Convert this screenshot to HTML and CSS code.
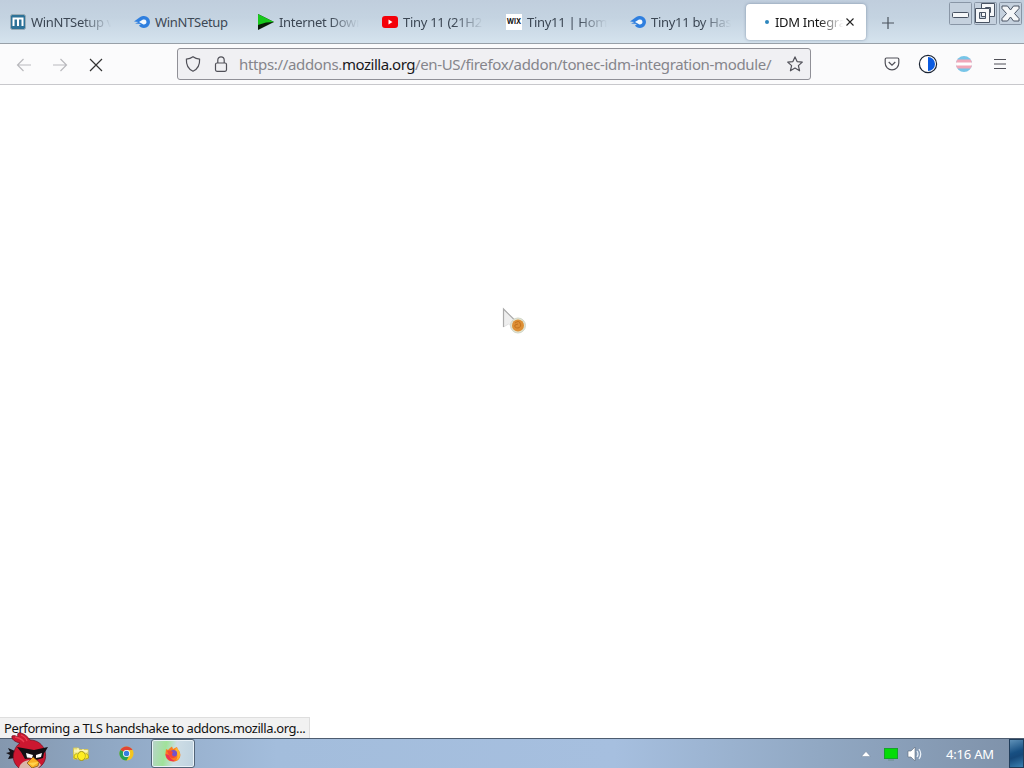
FILE: index.html
```html
<!DOCTYPE html>
<html lang="en">
<head>
  <meta charset="UTF-8">
  <meta name="viewport" content="width=device-width, initial-scale=1.0">
  <title>IDM Integration Module</title>
  <link rel="stylesheet" href="styles.css">
</head>
<body>
  <div class="screen">
    <div class="tab-bar">
      <div class="tab">
        <svg class="tab-icon" viewBox="0 0 16 16"><rect x=".5" y=".5" width="15" height="15" rx="2" fill="#2d7298" stroke="#9aabb5"/><path d="M3.500 12V4.500h9V12M8 4.500V12" fill="none" stroke="#fff" stroke-width="2"/></svg>
        <span class="tab-label">WinNTSetup v</span>
      </div>
      <div class="tab">
        <svg class="tab-icon" viewBox="0 0 16 16"><path d="M0 7.500 5.500 3.500C7 2 9 2 10 2a6 6 0 0 1 0 12C7.500 14 6 13 5 11.500L7 10 1 9.500 4.500 8Z" fill="#2f7fdf"/><path d="M5 8 9 5.600a2.500 2.500 0 1 1 0 4.600Z" fill="#f4faff"/></svg>
        <span class="tab-label">WinNTSetup</span>
      </div>
      <div class="tab">
        <svg class="tab-icon" viewBox="0 0 16 16"><path d="M0 0 16 8 0 16Z" fill="#0a1c08"/><path d="M0 0 16 8 8 8.500 0 11Z" fill="#18c81c"/></svg>
        <span class="tab-label">Internet Down</span>
      </div>
      <div class="tab">
        <svg class="tab-icon" viewBox="0 0 16 16"><rect x="0" y="2" width="16" height="12" rx="3" fill="#f40009"/><path d="M6.500 5.500 10.500 8l-4 2.500Z" fill="#fff"/></svg>
        <span class="tab-label">Tiny 11 (21H2</span>
      </div>
      <div class="tab">
        <span class="tab-icon wix">WIX</span>
        <span class="tab-label">Tiny11 | Home</span>
      </div>
      <div class="tab">
        <svg class="tab-icon" viewBox="0 0 16 16"><path d="M0 7.500 5.500 3.500C7 2 9 2 10 2a6 6 0 0 1 0 12C7.500 14 6 13 5 11.500L7 10 1 9.500 4.500 8Z" fill="#2f7fdf"/><path d="M5 8 9 5.600a2.500 2.500 0 1 1 0 4.600Z" fill="#f4faff"/></svg>
        <span class="tab-label">Tiny11 by Has</span>
      </div>
      <div class="tab active">
        <span class="loading-dot"></span>
        <span class="tab-label">IDM Integra</span>
        <svg class="tab-close" viewBox="0 0 10 10"><path d="m1.500 1.500 7 7M8.500 1.500l-7 7" stroke="#222" stroke-width="1.100"/></svg>
      </div>
      <svg class="new-tab" viewBox="0 0 14 14"><path d="M7 1v12M1 7h12" stroke="#4a535c" stroke-width="1.200"/></svg>
      <div class="window-buttons">
        <svg viewBox="0 0 23 23"><rect class="frame" x=".5" y=".5" width="22" height="22" rx="1"/><rect class="glyph" x="3.500" y="10.500" width="16" height="5" rx="1"/></svg>
        <svg viewBox="0 0 23 23"><rect class="frame" x=".5" y=".5" width="22" height="22" rx="1"/><path class="glyph" fill-rule="evenodd" d="M7.500 1.500h13v13h-13ZM11.500 5.500v5h5v-5Z"/><path class="glyph" fill-rule="evenodd" d="M1.500 6.500h14v14h-14ZM5.500 10.500v6h6v-6Z"/></svg>
        <svg viewBox="0 0 23 23"><rect class="frame" x=".5" y=".5" width="22" height="22" rx="1"/><path class="glyph" stroke-linejoin="round" d="M3 4h5.500l3 4 3-4H20v2.500l-4.500 5L20 16.500V19h-5.500l-3-4-3 4H3v-2.500l4.500-5L3 6.500Z"/></svg>
      </div>
    </div>

    <div class="toolbar">
      <div class="nav-buttons">
        <svg class="faded" viewBox="0 0 16 16"><path d="M15 9H1.500M7.500 3l-6 6 6 6"/></svg>
        <svg class="faded" viewBox="0 0 16 16"><path d="M1 9h13.500M8.500 3l6 6-6 6"/></svg>
        <svg class="stop" viewBox="0 0 16 16"><path d="m2 3 12 12M14 3 2 15"/></svg>
      </div>
      <div class="url-bar">
        <svg class="shield" viewBox="0 0 16 16"><path d="M8 .8c2 1.500 4 2.200 6.600 2.400.3 5.300-1.200 9.500-6.600 12C2.600 12.700 1.100 8.500 1.400 3.200 4 3 6 2.300 8 .8Z"/></svg>
        <svg class="lock" viewBox="0 0 16 16"><rect x="2.500" y="7" width="11" height="8.300" rx="1.500"/><path d="M4.800 7V4a3.200 3.200 0 0 1 6.400 0v3"/></svg>
        <span class="url">https://addons.<b>mozilla.org</b>/en-US/firefox/addon/tonec-idm-integration-module/</span>
        <svg class="star" viewBox="0 0 16 16"><path d="m8 .9 2.100 4.700 5.200.5-3.900 3.500 1.200 5.200L8 12.100l-4.600 2.700 1.200-5.200L.7 6.100l5.200-.5Z" stroke-linejoin="round"/></svg>
      </div>
      <div class="tools">
        <svg class="pocket" viewBox="0 0 16 16"><path d="M2.500 2h11c.8 0 1.300.5 1.300 1.300V7a6.800 6.800 0 0 1-13.600 0V3.300C1.200 2.500 1.700 2 2.500 2Z"/><path d="M4.700 6 8 9.200 11.300 6"/></svg>
        <svg class="contrast" viewBox="0 0 20 20"><circle cx="10" cy="10" r="8.600" fill="#fff" stroke="#1b2433" stroke-width="1.200"/><path d="M10 3a7 7 0 0 1 0 14Z" fill="#0b5be0"/></svg>
        <svg class="flag" viewBox="0 0 16 16"><clipPath id="round"><circle cx="8" cy="8" r="8"/></clipPath><g clip-path="url(#round)"><path fill="#77c5e8" d="M0 0h16v16H0Z"/><path fill="#f1a7b8" d="M0 3.400h16v9.200H0Z"/><path fill="#fff" d="M0 6.500h16v3H0Z"/></g></svg>
        <svg class="menu" viewBox="0 0 16 16"><path d="M2 3.500h12M2 8h12M2 12.500h12"/></svg>
      </div>
    </div>

    <div class="page"></div>
    <div class="status">Performing a TLS handshake to addons.mozilla.org...</div>

    <div class="taskbar">
      <svg class="app-icon explorer" viewBox="0 0 16 16"><path d="M.5 2h5l1 1.500H15V13H.5Z" fill="#f5ec8a" stroke="#d3c65a"/><path d="M1 5h14M5 2v3M10 3v3" stroke="#fffbd0"/><ellipse cx="8.500" cy="10" rx="4" ry="4.500" fill="#ffee20" stroke="#a39818"/><path d="M4.500 8C2 7 1 9 1 12l3 1M12.500 8c2-1 3 1 3 4l-3 1" fill="#ffee20" stroke="#a39818" stroke-width=".8"/></svg>
      <svg class="app-icon chrome" viewBox="0 0 16 16"><circle cx="8" cy="8" r="7.500" fill="#f5c51f"/><path d="M8 8 1.500 4.200A7.500 7.500 0 0 1 14.500 4.200H8Z" fill="#df4535"/><path d="M1.500 4.200A7.500 7.500 0 0 0 8 15.500L11 10 8 8Z" fill="#28a255"/><circle cx="8" cy="8" r="3.800" fill="#fff"/><circle cx="8" cy="8" r="2.900" fill="#377fe0"/></svg>
      <div class="running-app">
        <svg class="app-icon" viewBox="0 0 16 16"><path d="M5 2 7 .5 8 3l4-2 1 3c4 3 3 11-4 11.500C3 16 0 12 .5 7L1 3l2 1Z" fill="#fa7b20"/><path d="M11 1.500c6 4 5 11 0 13 2-3 2-7-1-10Z" fill="#ffb42b"/><path d="M.5 8C1 13 5 16 10 15c-3-1-5-3-6-6Z" fill="#ee3155"/><circle cx="8.500" cy="7.500" r="3.600" fill="#7552c8"/><path d="M2 5c3-1 4 0 6 1L7 8c0 2 2 3 4 2-1 3-6 3-7-1Z" fill="#f64b31"/></svg>
      </div>
      <div class="tray">
        <svg class="arrow" viewBox="0 0 10 6"><path d="M.5 5.500 5 .5l4.500 5Z" fill="#fff" stroke="#65788f" stroke-width=".4"/></svg>
        <svg class="monitor" viewBox="0 0 16 14"><rect x="1.500" y="1.500" width="13" height="10" fill="#04dc08" stroke="#15a32a"/><path d="M5 13h6" stroke="#6a8f88"/></svg>
        <svg class="speaker" viewBox="0 0 16 16"><path d="M1 5h3l4-4v14l-4-4H1Z" fill="#fff" stroke="#5c6878" stroke-width=".6"/><path d="M10 5q2 3 0 6M12 3q3.500 5 0 10" fill="none" stroke="#eef4fa" stroke-width="1.200"/></svg>
        <span class="clock">4:16 AM</span>
        <span class="show-desktop"></span>
      </div>
    </div>

    <!-- start orb, sticks out over the taskbar -->
    <svg class="start" viewBox="0 0 44 36">
      <path d="m9 19-7-3 2 4-4 1 4 2-2 4 7-1Z" fill="#171319"/>
      <path d="M14 11C9 10 5 7 6 4c2-1 4 0 6 1-1-3 0-5 3-4 4 1 7 4 9 7 8 0 13 5 15 11 2 8-1 14-7 17H13C8 32 6 26 8 20c1-4 3-7 6-9Z" fill="#cc1730" stroke="#6b1020" stroke-width=".7"/>
      <path d="M9 5q6 1 9 5M15 3q5 2 6 6" fill="none" stroke="#ea3d50" stroke-width="1.300"/>
      <path d="M13 36c1-5 6-8 12-8 5 0 8 2 10 5l-3 3Z" fill="#d9b7aa"/>
      <path d="m11 15 17 3 14-3-3 5-1 1-1 5-7 2-3-2-8 1-4-7Z" fill="#120f14"/>
      <path d="m20 21 7 2-1 3-5-.5ZM36 21l-6 2v3l5-1Z" fill="#fff"/>
      <path d="m21 31 6-6 6 5-1 4-6 2Z" fill="#f8ae24" stroke="#64400c" stroke-width=".6"/>
      <path d="m22 31 11-1-6 4Z" fill="#ffd34b"/>
    </svg>

    <svg class="cursor" viewBox="0 0 26 28">
      <path d="M1.500 2v18l5-3 4 3 4-1-2-4h3Z" fill="#eee" stroke="#e2e2e2"/>
      <path d="M1.500 20V2l14 14" fill="none" stroke="#ababab" stroke-width="1.200"/>
      <circle cx="16" cy="18.500" r="7.500" fill="#e2e4d0" stroke="#d2d6c8"/>
      <circle cx="16" cy="18.500" r="6" fill="#dd8f35"/>
      <path d="M13 16q4-3 5 0 2 4-2 5-4 0-3-3l3-1" fill="none" stroke="#c4721c"/>
    </svg>
  </div>
</body>
</html>
```

FILE: styles.css
```css
* {
  box-sizing: border-box;
}
body {
  margin: 0;
  font-family: "Noto Sans", "Open Sans", sans-serif;
  font-size: 13px;
  overflow: hidden;
}
svg {
  display: block;
  flex-shrink: 0;
}
.screen {
  position: relative;
  width: 1024px;
  height: 768px;
  display: flex;
  flex-direction: column;
  background: #fff;
}
.tab-bar {
  height: 44px;
  display: flex;
  padding-left: 2px;
  background: linear-gradient(#c0cedd, #c4d3e1 40%, #d5e3ee);
  border-bottom: 1px solid #98a0a8;
}
.tab {
  width: 120px;
  height: 36px;
  margin: 4px 4px 0 0;
  padding: 0 8px;
  display: flex;
  flex-shrink: 0;
  align-items: center;
  gap: 5px;
  color: #3c4754;
}
.tab-icon {
  width: 16px;
  height: 16px;
  flex-shrink: 0;
}
.wix {
  background: #fff;
  color: #111;
  font: bold 7px/16px Inter, sans-serif;
  text-align: center;
}
.tab-label {
  width: 82px;
  white-space: nowrap;
  line-height: 20px;
  letter-spacing: -0.3px;
  -webkit-mask-image: linear-gradient(to right, #000 62%, transparent 98%);
  mask-image: linear-gradient(to right, #000 62%, transparent 98%);
}
.tab:nth-child(2) .tab-label {
  -webkit-mask-image: none;
  mask-image: none;
}
.active {
  background: #fff;
  border-radius: 4px;
  box-shadow: 0 0 3px rgba(60, 80, 110, 0.5);
  color: #151515;
  gap: 0;
}
.loading-dot {
  width: 4px;
  height: 4px;
  margin: 0 6px 0 11px;
  border-radius: 50%;
  background: #2d86bd;
  flex-shrink: 0;
}
.active .tab-label {
  width: 70px;
}
.tab-close {
  width: 10px;
  height: 10px;
}
.new-tab {
  width: 14px;
  height: 14px;
  margin: 16px 0 0 11px;
}
.window-buttons {
  display: flex;
  gap: 2px;
  margin: 2px 2px 0 auto;
}
.window-buttons svg {
  width: 23px;
  height: 23px;
}
.frame {
  fill: #c5d1de;
  stroke: #8996a6;
}
.glyph {
  fill: #f5f7f9;
  stroke: #485363;
}
.toolbar {
  height: 41px;
  display: flex;
  align-items: center;
  background: #fbfbfc;
  border-bottom: 1px solid #c8c8cc;
}
.toolbar svg {
  fill: none;
  stroke: #505058;
  stroke-width: 1.2;
}
.nav-buttons {
  width: 177px;
  display: flex;
  gap: 20px;
  padding-left: 16px;
}
.nav-buttons svg {
  width: 16px;
  height: 16px;
}
.toolbar .nav-buttons .faded {
  stroke: #b9b9bd;
}
.toolbar .nav-buttons .stop {
  stroke: #333;
}
.url-bar {
  width: 634px;
  height: 32px;
  display: flex;
  align-items: center;
  padding: 0 7px;
  background: #f0f0f3;
  border: 1px solid #909097;
  border-radius: 3px;
}
.shield, .lock, .star {
  width: 16px;
  height: 16px;
}
.lock {
  margin-left: 12px;
}
.url {
  width: 548px;
  margin-left: 10px;
  white-space: nowrap;
  font-size: 15px;
  letter-spacing: -0.34px;
  color: #85858b;
}
.url b {
  font-weight: normal;
  letter-spacing: -0.5px;
  color: #18181c;
}
.tools {
  display: flex;
  align-items: center;
  margin-left: 73px;
}
.pocket, .flag, .menu {
  width: 16px;
  height: 16px;
}
.contrast {
  width: 20px;
  height: 20px;
  margin: 0 18px;
}
.toolbar .contrast path,
.toolbar .flag path {
  stroke: none;
}
.menu {
  margin-left: 20px;
}
.page {
  flex: 1;
}
.status {
  width: 310px;
  height: 21px;
  padding-left: 4px;
  background: #f1f1f1;
  border: solid #dedede;
  border-width: 1px 1px 0 0;
  color: #111;
  line-height: 21px;
  letter-spacing: -0.41px;
  white-space: nowrap;
}
.taskbar {
  height: 30px;
  display: flex;
  align-items: center;
  padding-left: 73px;
  background: linear-gradient(90deg, #8497ae, #8fa7c3 10%, #a3bddc 27%, #a6bfdf 60%, #91a8c3 80%, #7e91a9);
  border-top: 1px solid #4d5c70;
}
.app-icon {
  width: 16px;
  height: 16px;
}
.chrome {
  width: 15px;
  height: 15px;
  margin-left: 30px;
}
.running-app {
  width: 44px;
  height: 29px;
  margin-left: 17px;
  display: flex;
  align-items: center;
  justify-content: center;
  background: linear-gradient(100deg, #b9d3cc, #a0e29a 32%, #cddde5 55%, #bfd2df);
  border: 1px solid #526478;
  border-radius: 3px;
  box-shadow: inset 0 0 0 1px #eaf3f8;
}
.tray {
  height: 29px;
  margin-left: auto;
  display: flex;
  align-items: center;
  color: #fff;
}
.arrow {
  width: 10px;
  height: 6px;
}
.monitor {
  width: 16px;
  height: 14px;
  margin-left: 12px;
}
.speaker {
  width: 16px;
  height: 16px;
  margin-left: 8px;
}
.clock {
  width: 50px;
  margin-left: 23px;
  letter-spacing: -0.2px;
  white-space: nowrap;
}
.show-desktop {
  width: 15px;
  height: 29px;
  margin-left: 13px;
  background: linear-gradient(160deg, #5f91b8, #174f82 45%, #164879 60%, #3a80b0);
  border: 1px solid #203d5b;
}
.start {
  position: absolute;
  left: 6px;
  top: 732px;
  width: 44px;
  height: 36px;
}
.cursor {
  position: absolute;
  left: 502px;
  top: 307px;
  width: 26px;
  height: 28px;
}
```
